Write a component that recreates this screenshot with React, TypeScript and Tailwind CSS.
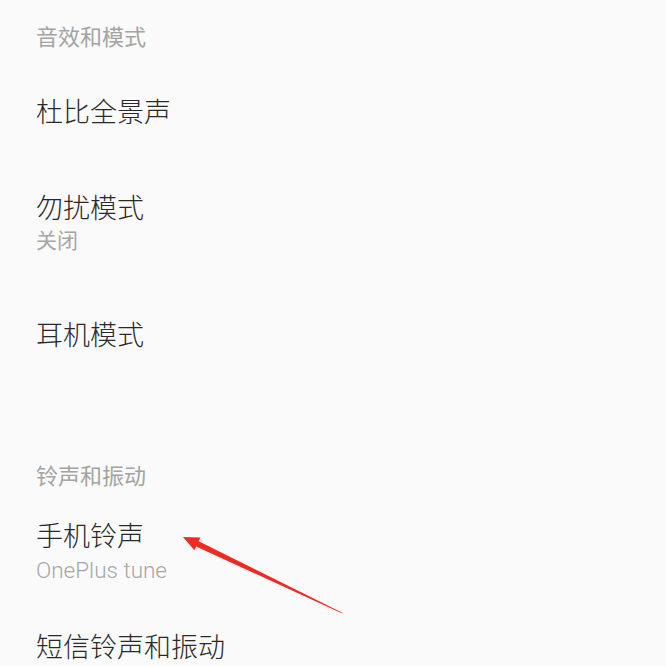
import React from "react";

const cjk = { fontFamily: '"Noto Sans CJK SC", "Noto Sans", sans-serif' };

function Header({ text, className }: { text: string; className?: string }) {
  return (
    <div className={`text-[22px] leading-[30px] text-[#a3a3a3] ${className ?? ""}`}>{text}</div>
  );
}

function Title({ text, className }: { text: string; className?: string }) {
  return (
    <div className={`text-[27px] leading-[36px] text-[#292929] font-light ${className ?? ""}`}>{text}</div>
  );
}

export default function App() {
  return (
    <div className="relative w-[666px] h-[666px] overflow-hidden bg-[#fafafa]" style={cjk}>
      <div className="flex flex-col pl-[36px] pt-[20px]">
        <Header text="音效和模式" />
        <Title text="杜比全景声" className="mt-[43px]" />
        <Title text="勿扰模式" className="mt-[60px]" />
        <div className="text-[21px] leading-[28px] text-[#a6a6a6]">关闭</div>
        <Title text="耳机模式" className="mt-[63px]" />
        <Header text="铃声和振动" className="mt-[107px]" />
        <Title text="手机铃声" className="mt-[28px]" />
        <div
          className="text-[22.5px] leading-[34px] text-[#a6a6a6] font-light"
          style={{ fontFamily: 'Roboto, "Liberation Sans", sans-serif' }}
        >
          OnePlus tune
        </div>
        <Title text="短信铃声和振动" className="mt-[41px]" />
      </div>
      <svg
        className="absolute left-0 top-0 pointer-events-none"
        width="666"
        height="666"
        viewBox="0 0 666 666"
      >
        <polygon
          points="183,537 200.4,537.6 198.7,541.2 342.3,612.7 341.7,613.3 196.1,546.6 194.4,550.2"
          fill="#ee2a22"
        />
      </svg>
    </div>
  );
}
